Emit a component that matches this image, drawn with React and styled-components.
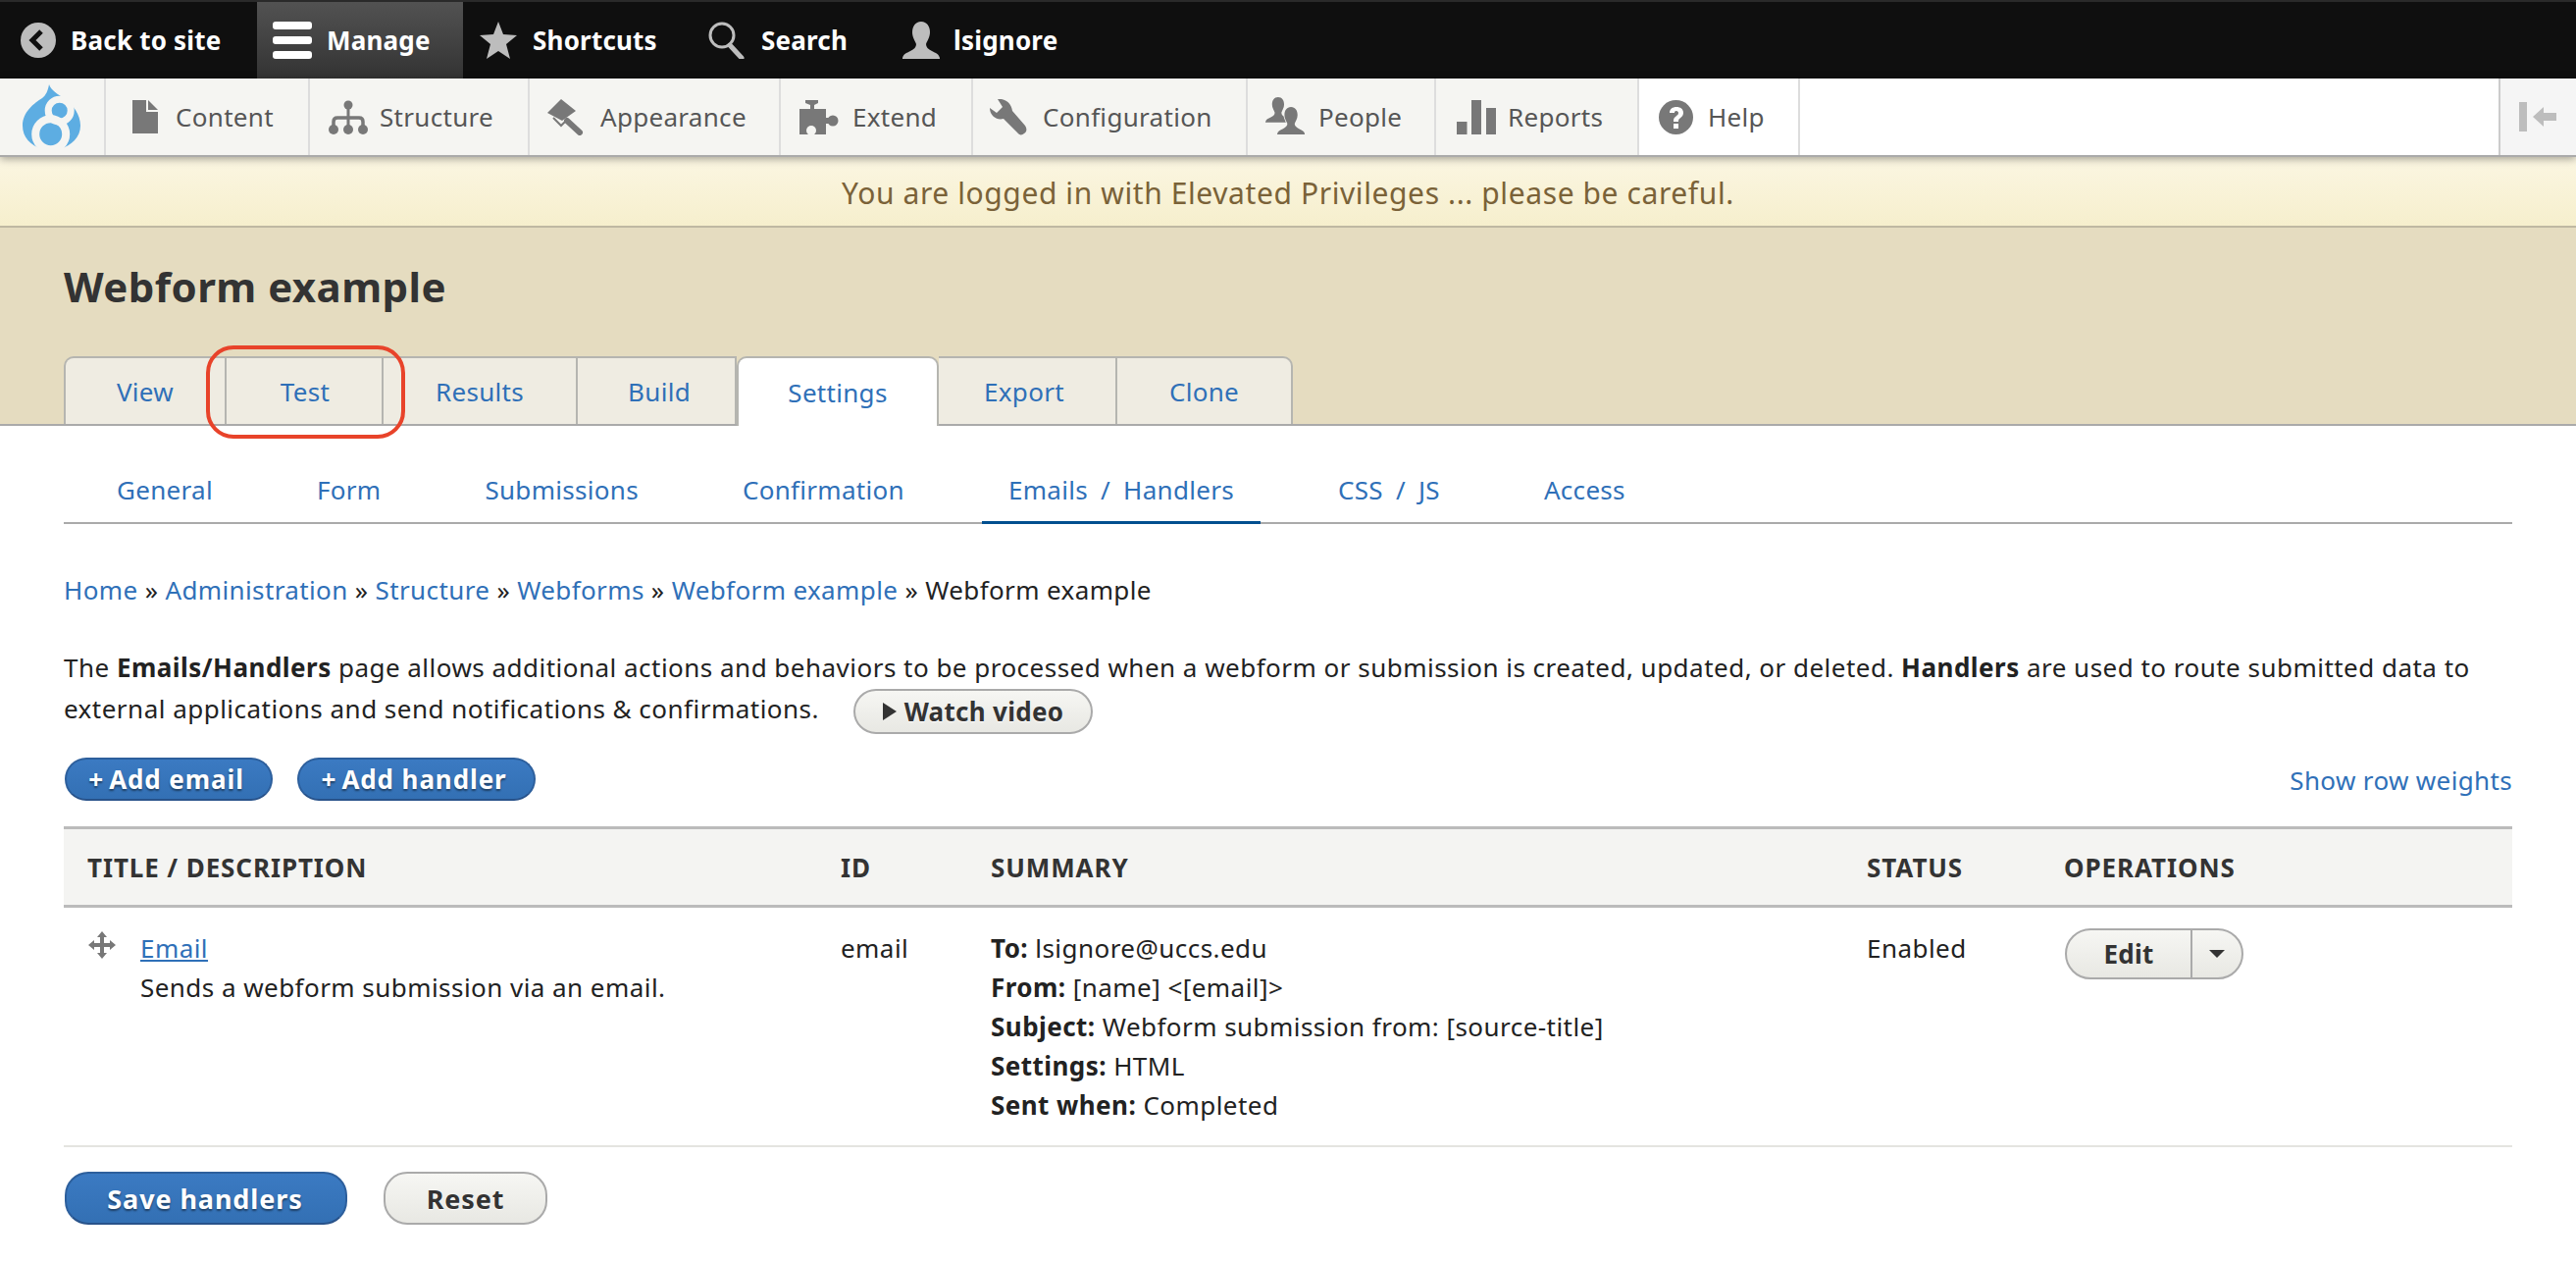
import React from "react";
import styled, { createGlobalStyle } from "styled-components";

const FONT = `"Noto Sans", "Open Sans", "DejaVu Sans", sans-serif`;

const GlobalStyle = createGlobalStyle`
  html, body {
    margin: 0;
    padding: 0;
    background: #fff;
  }
  body {
    font-family: ${FONT};
    font-size: 26px;
    color: #333;
  }
  * {
    box-sizing: border-box;
  }
`;

const Page = styled.div`
  position: relative;
  width: 2626px;
  height: 1286px;
  overflow: hidden;
  background: #fff;
`;

const TopBar = styled.div`
  display: flex;
  height: 80px;
  padding-top: 2px;
  background: #0f0f0f;
  border-top: 2px solid #2a2a2a;
`;

const TopItem = styled.a`
  display: flex;
  align-items: center;
  gap: ${(p) => p.$gap || 16}px;
  width: ${(p) => p.$w}px;
  padding-left: ${(p) => p.$pad}px;
  color: #fff;
  font-size: 26px;
  font-weight: 700;
  letter-spacing: 0.2px;
  background: ${(p) => (p.$active ? "linear-gradient(#525252, #333)" : "none")};
  margin-top: -2px;
`;

const AdminBar = styled.div`
  display: flex;
  height: 80px;
  background: #fff;
  border-bottom: 2px solid #aaa;
  box-shadow: 0 2px 8px rgba(0, 0, 0, 0.35);
  position: relative;
`;

const LogoCell = styled.div`
  display: flex;
  align-items: center;
  justify-content: center;
  width: 108px;
  background: #f5f5f2;
  border-right: 2px solid #ddd;
`;

const AdminItem = styled.a`
  display: flex;
  align-items: center;
  gap: ${(p) => p.$gap}px;
  width: ${(p) => p.$w}px;
  padding-left: ${(p) => p.$pad}px;
  font-size: 26px;
  letter-spacing: 0.3px;
  color: #565656;
  background: ${(p) => (p.$plain ? "#fff" : "#f5f5f2")};
  border-right: 2px solid #ddd;
`;

const AdminSpacer = styled.div`
  flex: 1;
`;

const Collapse = styled.div`
  display: flex;
  align-items: center;
  justify-content: center;
  width: 79px;
  background: #f5f5f5;
  border-left: 2px solid #ccc;
`;

const Notice = styled.div`
  display: flex;
  align-items: center;
  justify-content: center;
  height: 72px;
  padding-top: 2px;
  font-size: 30px;
  letter-spacing: 0.6px;
  color: #7a6238;
  background: linear-gradient(#fbf6e2, #f6efcd);
  border-bottom: 2px solid #bfb8a2;
`;

const Header = styled.div`
  height: 202px;
  padding: 37px 65px 0;
  background: #e5dcc0;
  border-bottom: 2px solid #aaa;
`;

const Title = styled.h1`
  margin: 0;
  height: 94px;
  font-size: 42px;
  line-height: 46px;
  font-weight: 700;
  letter-spacing: 0.45px;
  color: #333;
`;

const Tabs = styled.div`
  display: flex;
`;

const Tab = styled.a`
  display: flex;
  align-items: center;
  justify-content: center;
  height: ${(p) => (p.$active ? 71 : 69)}px;
  width: ${(p) => p.$w}px;
  margin-bottom: ${(p) => (p.$active ? -2 : 0)}px;
  padding-left: ${(p) => p.$nudgeRight || 0}px;
  padding-right: ${(p) => p.$nudgeLeft || 0}px;
  font-size: 26px;
  letter-spacing: 0.3px;
  color: #2f70b8;
  background: ${(p) => (p.$active ? "#fff" : "#efece2")};
  border: 2px solid #b5b5b0;
  border-bottom: 0;
  border-left-width: ${(p) => (p.$first || p.$active ? 2 : 0)}px;
  border-radius: ${(p) => (p.$first ? "10px 0 0 0" : p.$last ? "0 10px 0 0" : p.$active ? "10px 10px 0 0" : "0")};
`;

const Main = styled.div`
  padding: 0 65px;
  font-size: 26px;
  letter-spacing: 0.45px;
  color: #222;
`;

const SubTabs = styled.div`
  display: flex;
  gap: 52px;
  height: 100px;
  padding-left: 27px;
  border-bottom: 2px solid #aaa;
`;

const SubTab = styled.a`
  display: flex;
  align-items: center;
  padding: 32px 27px 0;
  letter-spacing: 0.3px;
  word-spacing: 6px;
  color: #2f70b8;
  border-bottom: ${(p) => (p.$active ? "3px solid #004f8f" : "0")};
  margin-bottom: ${(p) => (p.$active ? -2 : 0)}px;
`;

const Breadcrumb = styled.div`
  margin-top: 47px;
  line-height: 40px;
  letter-spacing: 0.38px;
`;

const Link = styled.a`
  color: #2f70b8;
  text-decoration: ${(p) => (p.$under ? "underline" : "none")};
`;

const Intro = styled.p`
  margin: 38px 0 0;
  line-height: 42px;
  letter-spacing: 0.48px;
  white-space: nowrap;
`;

const Pill = styled.a`
  display: inline-flex;
  align-items: center;
  justify-content: center;
  gap: ${(p) => p.$gap || 0}px;
  height: ${(p) => p.$h}px;
  width: ${(p) => p.$w}px;
  padding-right: ${(p) => p.$inset || 0}px;
  border-radius: 24px;
  font-weight: 700;
  font-size: ${(p) => p.$size || 26}px;
  letter-spacing: 0.9px;
  ${(p) =>
    p.$primary
      ? `color: #fff;
         background: linear-gradient(#3b7ac2, #3370b4);
         border: 2px solid #2d5f9c;
         border-bottom-color: #28528a;
         text-shadow: 0 2px 2px rgba(0, 0, 0, 0.45);`
      : `color: #333;
         background: linear-gradient(#f6f6f3, #e8e8e3);
         border: 2px solid #aaa;
         text-shadow: 0 1px 1px #fff;`}
`;

const WatchVideo = styled(Pill)`
  margin: -8px 0 -8px 35px;
  vertical-align: middle;
  letter-spacing: 0.3px;
`;

const ActionRow = styled.div`
  display: flex;
  align-items: center;
  gap: 25px;
  margin-top: 29px;
  margin-left: 1px;
`;

const WeightLink = styled(Link)`
  margin-left: auto;
  margin-top: 2px;
  letter-spacing: 0.35px;
`;

const Grid = styled.div`
  display: grid;
  grid-template-columns: 792px 153px 893px 201px 1fr;
`;

const TableHead = styled(Grid)`
  height: 83px;
  margin-top: 26px;
  align-items: center;
  background: #f4f4f2;
  border-top: 3px solid #bbb;
  border-bottom: 3px solid #bbb;
  font-weight: 700;
  letter-spacing: 0.9px;
  color: #333;
`;

const HeadCell = styled.div`
  padding-left: ${(p) => p.$pad || 0}px;
`;

const TableRow = styled(Grid)`
  height: 244px;
  padding-top: 21px;
  border-bottom: 2px solid #e4e4e0;
  line-height: 40px;
`;

const TitleCell = styled.div`
  display: flex;
  gap: 25px;
  padding-left: 25px;
`;

const Handle = styled.svg`
  flex: none;
  width: 28px;
  height: 28px;
  margin-top: 3px;
`;

const SummaryLine = styled.div`
  white-space: nowrap;
`;

const SplitButton = styled.div`
  display: flex;
  width: 182px;
  height: 52px;
  margin-left: 1px;
  border: 2px solid #aaa;
  border-radius: 26px;
  background: linear-gradient(#f6f6f3, #e8e8e3);
  font-weight: 700;
  letter-spacing: 0.2px;
  color: #333;
`;

const SplitMain = styled.span`
  display: flex;
  align-items: center;
  justify-content: center;
  width: 128px;
  border-right: 2px solid #aaa;
`;

const SplitCaret = styled.span`
  display: flex;
  flex: 1;
  align-items: center;
  justify-content: center;
  &::after {
    content: "";
    border-left: 8px solid transparent;
    border-right: 8px solid transparent;
    border-top: 8px solid #333;
  }
`;

const FormActions = styled.div`
  display: flex;
  gap: 37px;
  margin-top: 25px;
  margin-left: 1px;
`;

const Highlight = styled.div`
  position: absolute;
  left: 210px;
  top: 352px;
  width: 203px;
  height: 95px;
  border: 4px solid #e8432a;
  border-radius: 28px;
  pointer-events: none;
`;

const Ico = ({ w, h, vb, children }) => (
  <svg width={w} height={h} viewBox={vb} style={{ flex: "none" }}>
    {children}
  </svg>
);

const BAR_BG = "#f5f5f2";
const G = "#787878";
const PERSON =
  "M19 0C25 0 28 5 28 11C28 16 25 20 24 23C24 26 26 28 30 30C34 32 37 33 38 37L38 38H0V37C1 33 4 32 8 30C12 28 14 26 14 23C13 20 10 16 10 11C10 5 13 0 19 0Z";

const DrupalLogo = () => (
  <Ico w={60} h={66} vb="0 0 60 66">
    <path
      d="M27 0C29 6 36 10 42 14C52 21 59 31 59 42C59 54 50 62 38 66H20C8 62 0 54 0 42C0 28 12 19 20 14C24 11 26 6 27 0Z"
      fill="#5dade2"
    />
    <circle cx="28.7" cy="50.7" r="15.5" fill="none" stroke={BAR_BG} strokeWidth="8" />
    <circle cx="37.7" cy="26.7" r="11.5" fill="none" stroke={BAR_BG} strokeWidth="7" />
  </Ico>
);

const BackIcon = () => (
  <Ico w={36} h={36} vb="0 0 36 36">
    <circle cx="18" cy="18" r="18" fill="#bdbdbd" />
    <path d="M21 9 12 18l9 9" fill="none" stroke="#111" strokeWidth="5" />
  </Ico>
);

const MenuIcon = () => (
  <Ico w={40} h={38} vb="0 0 40 38">
    <rect x="0" y="0" width="40" height="8" rx="3" fill="#fff" />
    <rect x="0" y="15" width="40" height="8" rx="3" fill="#fff" />
    <rect x="0" y="30" width="40" height="8" rx="3" fill="#fff" />
  </Ico>
);

const StarIcon = () => (
  <Ico w={38} h={38} vb="0 0 38 38">
    <path d="M19 0l5 13 14 1-11 9 4 15-12-8-12 8 4-15L0 14l14-1z" fill="#bdbdbd" />
  </Ico>
);

const SearchIcon = () => (
  <Ico w={38} h={38} vb="0 0 38 38">
    <circle cx="14" cy="14" r="12" fill="none" stroke="#bdbdbd" strokeWidth="3" />
    <path d="M22 24l12 13" stroke="#bdbdbd" strokeWidth="5" strokeLinecap="round" />
  </Ico>
);

const UserIcon = () => (
  <Ico w={38} h={38} vb="0 0 38 38">
    <path d={PERSON} fill="#bdbdbd" />
  </Ico>
);

const ContentIcon = () => (
  <Ico w={26} h={34} vb="0 0 26 34">
    <path d="M0 0h14v12h12v22H0z" fill={G} />
    <path d="M16 0l10 10H16z" fill={G} />
  </Ico>
);

const StructureIcon = () => (
  <Ico w={40} h={35} vb="0 0 40 35">
    <circle cx="20" cy="5" r="4.5" fill={G} />
    <rect x="18.5" y="5" width="3" height="25" fill={G} />
    <path d="M5 30V22Q5 18 9 18H31Q35 18 35 22V30" fill="none" stroke={G} strokeWidth="3.5" />
    <circle cx="5" cy="30" r="5" fill={G} />
    <circle cx="20" cy="30" r="5" fill={G} />
    <circle cx="35" cy="30" r="5" fill={G} />
  </Ico>
);

const AppearanceIcon = () => (
  <Ico w={38} h={37} vb="0 0 38 37">
    <path d="M15 0L30 12L16 22L1 14Z" fill={G} />
    <path d="M7 19L15 27L22 20" fill="none" stroke={G} strokeWidth="2" />
    <path d="M21 22L34 34" stroke={G} strokeWidth="6" strokeLinecap="round" />
  </Ico>
);

const ExtendIcon = () => (
  <Ico w={40} h={35} vb="0 0 40 35">
    <path d="M6 0H19V3L15 5V9H27V18H30V24H27V35H0V9H11V5L6 3Z" fill={G} />
    <circle cx="34" cy="21" r="5.5" fill={G} />
    <circle cx="12" cy="31" r="5" fill={BAR_BG} />
    <rect x="9.5" y="32" width="5" height="3" fill={BAR_BG} />
  </Ico>
);

const ConfigIcon = () => (
  <Ico w={38} h={37} vb="0 0 38 37">
    <path
      d="M8 0C14 -1 22 3 23 12L36 27C38 30 38 33 35 35C33 37 30 37 28 34L14 20C6 22 0 16 0 9L7 14L13 8Z"
      fill={G}
    />
  </Ico>
);

const PeopleIcon = () => (
  <Ico w={40} h={40} vb="0 0 40 40">
    <path d={PERSON} fill={G} transform="scale(0.68)" />
    <path
      d={PERSON}
      fill={G}
      stroke={BAR_BG}
      strokeWidth="2.5"
      paintOrder="stroke"
      transform="translate(12 10) scale(0.74)"
    />
  </Ico>
);

const ReportsIcon = () => (
  <Ico w={40} h={35} vb="0 0 40 35">
    <rect x="0" y="22" width="10.5" height="13" fill={G} />
    <rect x="15" y="0" width="10" height="35" fill={G} />
    <rect x="30" y="8" width="10" height="27" fill={G} />
  </Ico>
);

const HelpIcon = () => (
  <Ico w={35} h={35} vb="0 0 35 35">
    <circle cx="17.5" cy="17.5" r="17.5" fill={G} />
    <path
      d="M11 13c0-4 3-6 7-6s7 2 7 6c0 3-2 4-4 6-1 1-1 2-1 3h-5c0-2 0-4 2-5 2-2 3-2 3-4 0-1-1-2-2-2-2 0-2 1-2 2z"
      fill="#fff"
    />
    <rect x="15" y="24" width="5" height="5" fill="#fff" />
  </Ico>
);

const CollapseIcon = () => (
  <Ico w={40} h={30} vb="0 0 40 30">
    <rect x="0" y="0" width="8" height="30" fill="#bdbdbd" />
    <path d="M14 15l11-10v6h13v8H25v6z" fill="#bdbdbd" />
  </Ico>
);

const topItems = [
  { label: "Back to site", w: 262, pad: 21, gap: 15, icon: <BackIcon /> },
  { label: "Manage", w: 210, pad: 16, gap: 15, icon: <MenuIcon />, active: true },
  { label: "Shortcuts", w: 233, pad: 17, gap: 16, icon: <StarIcon /> },
  { label: "Search", w: 215, pad: 17, gap: 16, icon: <SearchIcon /> },
  { label: "lsignore", w: 200, pad: 0, gap: 14, icon: <UserIcon /> },
];

const adminItems = [
  { label: "Content", w: 208, pad: 27, gap: 18, icon: <ContentIcon /> },
  { label: "Structure", w: 224, pad: 19, gap: 12, icon: <StructureIcon /> },
  { label: "Appearance", w: 256, pad: 17, gap: 17, icon: <AppearanceIcon /> },
  { label: "Extend", w: 196, pad: 19, gap: 14, icon: <ExtendIcon /> },
  { label: "Configuration", w: 280, pad: 17, gap: 16, icon: <ConfigIcon /> },
  { label: "People", w: 192, pad: 18, gap: 14, icon: <PeopleIcon /> },
  { label: "Reports", w: 207, pad: 21, gap: 12, icon: <ReportsIcon /> },
  { label: "Help", w: 164, pad: 20, gap: 15, icon: <HelpIcon />, plain: true },
];

const primaryTabs = [
  { label: "View", w: 166, first: true },
  { label: "Test", w: 160, nudgeRight: 2 },
  { label: "Results", w: 198 },
  { label: "Build", w: 162, nudgeRight: 6 },
  { label: "Settings", w: 206, active: true },
  { label: "Export", w: 182, nudgeLeft: 6 },
  { label: "Clone", w: 179, last: true },
];

const secondaryTabs = [
  { label: "General" },
  { label: "Form" },
  { label: "Submissions" },
  { label: "Confirmation" },
  { label: "Emails / Handlers", active: true },
  { label: "CSS / JS" },
  { label: "Access" },
];

const summary = [
  ["To:", "lsignore@uccs.edu"],
  ["From:", "[name] <[email]>"],
  ["Subject:", "Webform submission from: [source-title]"],
  ["Settings:", "HTML"],
  ["Sent when:", "Completed"],
];

export default function App() {
  return (
    <Page>
      <GlobalStyle />
      <TopBar>
        {topItems.map((item) => (
          <TopItem key={item.label} $w={item.w} $pad={item.pad} $gap={item.gap} $active={item.active}>
            {item.icon}
            {item.label}
          </TopItem>
        ))}
      </TopBar>
      <AdminBar>
        <LogoCell>
          <DrupalLogo />
        </LogoCell>
        {adminItems.map((item) => (
          <AdminItem key={item.label} $w={item.w} $pad={item.pad} $gap={item.gap} $plain={item.plain}>
            {item.icon}
            {item.label}
          </AdminItem>
        ))}
        <AdminSpacer />
        <Collapse>
          <CollapseIcon />
        </Collapse>
      </AdminBar>
      <Notice>You are logged in with Elevated Privileges ... please be careful.</Notice>
      <Header>
        <Title>Webform example</Title>
        <Tabs>
          {primaryTabs.map((tab) => (
            <Tab
              key={tab.label}
              $w={tab.w}
              $active={tab.active}
              $first={tab.first}
              $last={tab.last}
              $nudgeLeft={tab.nudgeLeft}
              $nudgeRight={tab.nudgeRight}
            >
              {tab.label}
            </Tab>
          ))}
        </Tabs>
      </Header>
      <Main>
        <SubTabs>
          {secondaryTabs.map((tab) => (
            <SubTab key={tab.label} $active={tab.active}>
              {tab.label}
            </SubTab>
          ))}
        </SubTabs>
        <Breadcrumb>
          <Link>Home</Link> » <Link>Administration</Link> » <Link>Structure</Link> » <Link>Webforms</Link> »{" "}
          <Link>Webform example</Link> » Webform example
        </Breadcrumb>
        <Intro>
          The <b>Emails/Handlers</b> page allows additional actions and behaviors to be processed when a webform or
          submission is created, updated, or deleted. <b>Handlers</b> are used to route submitted data to
          <br />
          external applications and send notifications &amp; confirmations.
          <WatchVideo $h={46} $w={244} $gap={8} $size={26}>
            <svg width="14" height="18" viewBox="0 0 14 18">
              <path d="M0 0l14 9-14 9z" fill="#333" />
            </svg>
            Watch video
          </WatchVideo>
        </Intro>
        <ActionRow>
          <Pill $primary $h={44} $w={212} $inset={5}>
            +&thinsp;Add email
          </Pill>
          <Pill $primary $h={44} $w={243} $inset={5}>
            +&thinsp;Add handler
          </Pill>
          <WeightLink>Show row weights</WeightLink>
        </ActionRow>
        <TableHead>
          <HeadCell $pad={24}>TITLE / DESCRIPTION</HeadCell>
          <HeadCell>ID</HeadCell>
          <HeadCell>SUMMARY</HeadCell>
          <HeadCell>STATUS</HeadCell>
          <HeadCell>OPERATIONS</HeadCell>
        </TableHead>
        <TableRow>
          <TitleCell>
            <Handle viewBox="0 0 28 28">
              <path
                d="M14 0l5 6h-3v6h6V9l6 5-6 5v-3h-6v6h3l-5 6-5-6h3v-6H6v3l-6-5 6-5v3h6V6H9z"
                fill="#787878"
              />
            </Handle>
            <div>
              <Link $under>Email</Link>
              <div>Sends a webform submission via an email.</div>
            </div>
          </TitleCell>
          <div>email</div>
          <div>
            {summary.map(([name, value]) => (
              <SummaryLine key={name}>
                <b>{name}</b> {value}
              </SummaryLine>
            ))}
          </div>
          <div>Enabled</div>
          <div>
            <SplitButton>
              <SplitMain>Edit</SplitMain>
              <SplitCaret />
            </SplitButton>
          </div>
        </TableRow>
        <FormActions>
          <Pill $primary $h={54} $w={288} $size={27} $inset={2}>
            Save handlers
          </Pill>
          <Pill $h={54} $w={167} $size={27}>
            Reset
          </Pill>
        </FormActions>
      </Main>
      <Highlight />
    </Page>
  );
}
